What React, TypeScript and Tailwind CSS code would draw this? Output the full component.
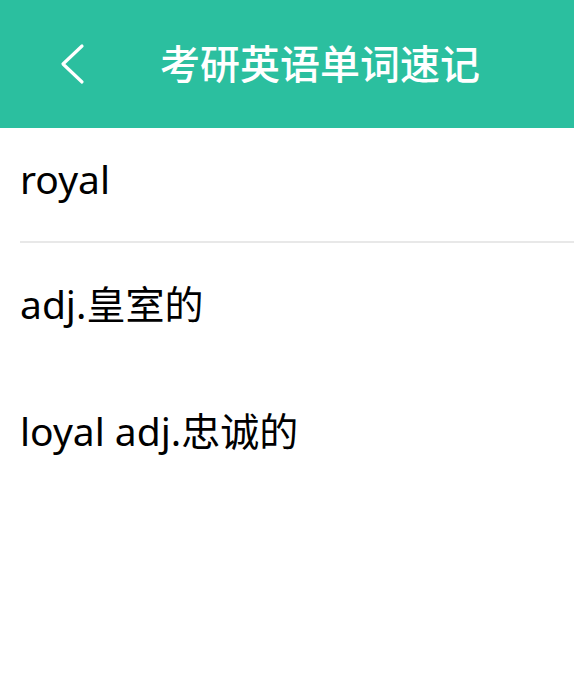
import { FunctionComponent } from 'react'

const font = { fontFamily: '"Noto Sans", "Noto Sans CJK SC", sans-serif' }

const App: FunctionComponent = () => {
  return (
    <div className="min-h-[700px] w-full bg-white" style={font}>
      {/* header */}
      <div className="flex h-[128px] items-center bg-[#2bbf9f] pl-[58px]">
        <svg width="28" height="42" viewBox="0 0 28 42" fill="none">
          <path d="M24 3L5 21L24 39" stroke="white" strokeWidth="3.2" strokeLinecap="round" strokeLinejoin="round" />
        </svg>
        <p className="ml-[74px] text-[40px] font-medium leading-none text-white">考研英语单词速记</p>
      </div>

      <div className="ml-5">
        <div className="flex h-[115px] items-center border-b-2 border-[#e8e8e8]">
          <p className="-mt-3 text-[39px] leading-none text-black">royal</p>
        </div>
        <div className="flex h-[125px] items-center">
          <p className="-mt-1 text-[39px] leading-none text-black">adj.皇室的</p>
        </div>
        <div className="flex h-[128px] items-center">
          <p className="-mt-1 text-[39px] leading-none text-black">loyal adj.忠诚的</p>
        </div>
      </div>
    </div>
  )
}

export default App
